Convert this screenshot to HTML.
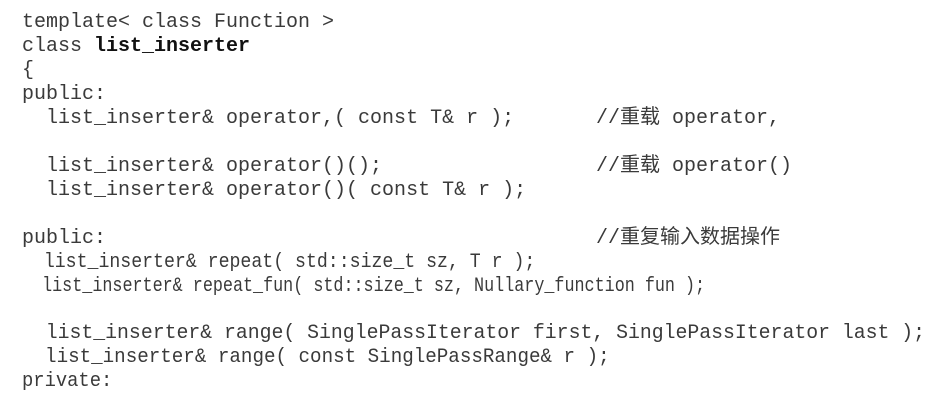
<!DOCTYPE html>
<html><head><meta charset="utf-8"><style>
html,body{margin:0;padding:0;background:#fff;}
body{width:928px;height:406px;position:relative;overflow:hidden;}
.l{position:absolute;left:22px;white-space:pre;font-family:"Liberation Mono","Noto Sans CJK SC",monospace;font-size:20px;line-height:20px;color:#3a3a3a;transform-origin:0 0;}
.c{left:596px;}
b{color:#111;}
</style></head><body>
<div class="l" style="top:13px">template&lt; class Function &gt;</div>
<div class="l" style="top:37px">class <b>list_inserter</b></div>
<div class="l" style="top:61px">{</div>
<div class="l" style="top:85px">public:</div>
<div class="l" style="top:109px">  list_inserter&amp; operator,( const T&amp; r );</div>
<div class="l c" style="top:109px">//重载 operator,</div>
<div class="l" style="top:157px">  list_inserter&amp; operator()();</div>
<div class="l c" style="top:157px">//重载 operator()</div>
<div class="l" style="top:181px">  list_inserter&amp; operator()( const T&amp; r );</div>
<div class="l" style="top:229px">public:</div>
<div class="l c" style="top:229px">//重复输入数据操作</div>
<div class="l" style="top:253px;transform:scaleX(0.91)">  list_inserter&amp; repeat( std::size_t sz, T r );</div>
<div class="l" style="top:277px;transform:scaleX(0.837)">  list_inserter&amp; repeat_fun( std::size_t sz, Nullary_function fun );</div>
<div class="l" style="top:324px;transform:scaleX(0.99)">  list_inserter&amp; range( SinglePassIterator first, SinglePassIterator last );</div>
<div class="l" style="top:348px;transform:scaleX(0.96)">  list_inserter&amp; range( const SinglePassRange&amp; r );</div>
<div class="l" style="top:372px;transform:scaleX(0.94)">private:</div>
</body></html>
